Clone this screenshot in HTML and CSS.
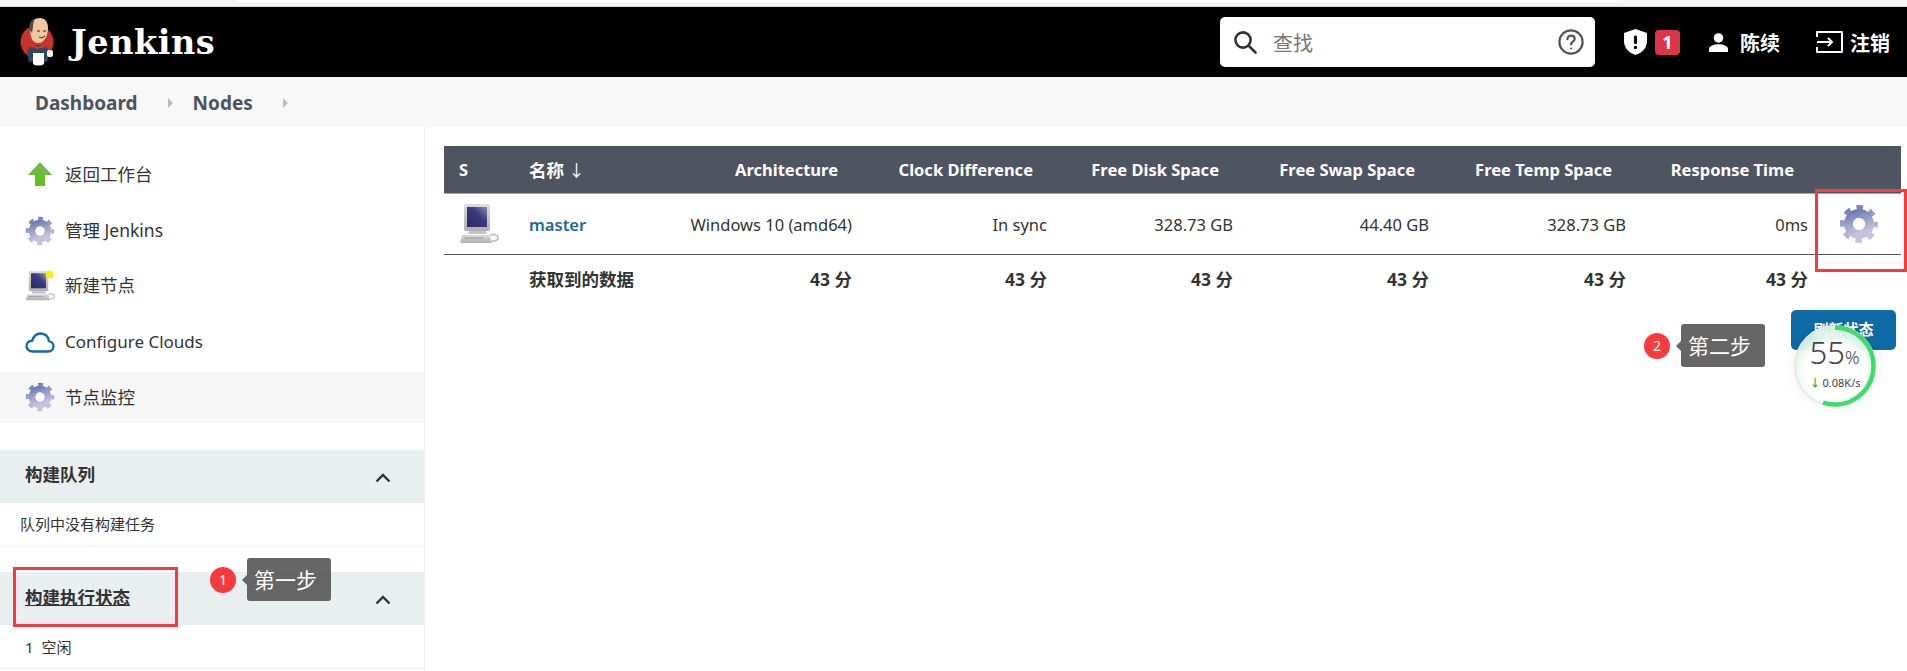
FILE: index.html
```html
<!DOCTYPE html>
<html lang="zh-CN">
<head>
    <meta charset="UTF-8">
    <meta name="viewport" content="width=device-width, initial-scale=1.0">
    <title>Nodes [Jenkins]</title>
    <link rel="stylesheet" href="styles.css">
</head>
<body>
    <!-- 共用图标 -->
    <svg class="icon-defs" xmlns="http://www.w3.org/2000/svg">
        <defs>
            <linearGradient id="gearFill" x1="0" y1="0" x2="0.3" y2="1">
                <stop offset="0" stop-color="#6f7db2"/>
                <stop offset="0.55" stop-color="#a3a5cc"/>
                <stop offset="1" stop-color="#c6c1de"/>
            </linearGradient>
            <linearGradient id="screenFill" x1="0" y1="1" x2="1" y2="0">
                <stop offset="0" stop-color="#2c2a6a"/>
                <stop offset="0.6" stop-color="#3d3a80"/>
                <stop offset="1" stop-color="#8d8ab8"/>
            </linearGradient>
            <linearGradient id="caseFill" x1="0" y1="0" x2="0" y2="1">
                <stop offset="0" stop-color="#dcdcdc"/>
                <stop offset="1" stop-color="#b0b0b0"/>
            </linearGradient>
            <linearGradient id="arrowFill" x1="0" y1="0" x2="0" y2="1">
                <stop offset="0" stop-color="#7fb35a"/>
                <stop offset="1" stop-color="#5cc414"/>
            </linearGradient>
            <symbol id="gear" viewBox="0 0 40 40">
                <circle cx="20" cy="20" r="15.5" fill="none" stroke="url(#gearFill)" stroke-width="7" stroke-dasharray="6.2 6" stroke-dashoffset="3"/>
                <circle cx="20" cy="20" r="10.5" fill="none" stroke="url(#gearFill)" stroke-width="9"/>
                <circle cx="20" cy="20" r="6" fill="#fff"/>
            </symbol>
            <symbol id="computer" viewBox="0 0 40 40">
                <rect x="5" y="0" width="26" height="27" rx="2" fill="url(#caseFill)"/>
                <rect x="8" y="3" width="20" height="20" fill="url(#screenFill)"/>
                <path d="M10 27h17l1 3H9z" fill="#c4c4c4"/>
                <path d="M3 31h28l2 8H1z" fill="url(#caseFill)"/>
                <path d="M5 34h20" stroke="#9a9a9a" stroke-width="1"/>
                <path d="M31 31c5-1 8 0 8 3s-3 3-6 3" fill="none" stroke="#c4c4c4" stroke-width="2"/>
            </symbol>
        </defs>
    </svg>

    <div class="window-strip"><div class="window-tab"></div></div>

    <div class="header">
        <a class="brand">
            <svg class="brand-logo" viewBox="0 0 36 48">
                <circle cx="17" cy="24" r="16.5" fill="#c5332b"/>
                <path d="M7 36c0-6 5-9 11-9s11 3 11 9l-2 8H9z" fill="#2f4a5f"/>
                <path d="M12 26l6 3 6-3 1 3-7 2-7-2z" fill="#d8322a"/>
                <path d="M10 8c0-5 5-8 10-8s8 4 8 10c0 7-3 15-10 15S10 17 10 8z" fill="#f1c6a0"/>
                <path d="M10 12c-2-5 1-10 5-11-2 3-2 6-2 8l-1 6z" fill="#4b4b4b"/>
                <path d="M17 13h3M23 13h3M19 19c2 1 4 1 6-1" stroke="#3a2a20" stroke-width="1" fill="none"/>
                <path d="M13 35h11v11c-3 2-8 2-11 0z" fill="#fff"/>
                <rect x="27" y="32" width="6" height="7" rx="2" fill="#f4f4f4"/>
            </svg>
            <span class="brand-name">Jenkins</span>
        </a>
        <div class="search-box">
            <svg class="search-icon" viewBox="0 0 24 24" fill="none" stroke="#333" stroke-width="2.6" stroke-linecap="round">
                <circle cx="10" cy="10" r="7.6"/>
                <path d="M15.6 15.6L22.5 22.5"/>
            </svg>
            <span class="search-text">查找</span>
            <svg class="help-icon" viewBox="0 0 26 26" fill="none" stroke="#4f5560" stroke-width="2.2">
                <circle cx="13" cy="13" r="11.6"/>
                <path d="M9.4 10.2c0-2.2 1.6-3.6 3.7-3.6s3.6 1.3 3.6 3.2c0 2.8-3.7 2.9-3.7 5.7" stroke-linecap="round"/>
                <circle cx="13" cy="19.4" r="1" fill="#4f5560" stroke="none"/>
            </svg>
        </div>
        <div class="header-actions">
            <div class="action action-alert">
                <svg class="shield-icon" viewBox="0 0 23 26">
                    <path d="M11.5 0L23 4v8c0 7-5 12-11.5 14C5 24 0 19 0 12V4z" fill="#fff"/>
                    <rect x="10" y="6.5" width="3" height="8.5" rx="1.2" fill="#000"/>
                    <circle cx="11.5" cy="18.5" r="1.7" fill="#000"/>
                </svg>
                <span class="badge">1</span>
            </div>
            <div class="action action-user">
                <svg class="person-icon" viewBox="0 0 20 20" fill="#fff">
                    <circle cx="10" cy="5.2" r="5"/>
                    <path d="M0 20v-3c0-3.500 5-5.200 10-5.200s10 1.700 10 5.200v3z"/>
                </svg>
                <span>陈续</span>
            </div>
            <div class="action action-logout">
                <svg class="logout-icon" viewBox="0 0 27 22" fill="none" stroke="#fff" stroke-width="2" stroke-linejoin="round">
                    <path d="M1 6V1h25v20H1v-5"/>
                    <path d="M1 11h15M12 7l4 4-4 4"/>
                </svg>
                <span>注销</span>
            </div>
        </div>
    </div>

    <div class="breadcrumb">
        <a class="crumb">Dashboard</a>
        <span class="crumb-arrow"></span>
        <a class="crumb">Nodes</a>
        <span class="crumb-arrow"></span>
    </div>

    <div class="page">
        <div class="sidebar">
            <div class="task-list">
                <a class="task">
                    <svg class="task-icon" viewBox="0 0 30 30">
                        <path d="M15 2L27 15h-7v11H10V15H3z" fill="url(#arrowFill)"/>
                    </svg>
                    <span>返回工作台</span>
                </a>
                <a class="task">
                    <svg class="task-icon"><use href="#gear"/></svg>
                    <span>管理 Jenkins</span>
                </a>
                <a class="task">
                    <span class="task-icon-wrap">
                        <svg class="task-icon"><use href="#computer"/></svg>
                        <span class="new-dot"></span>
                    </span>
                    <span>新建节点</span>
                </a>
                <a class="task task-latin">
                    <svg class="task-icon" viewBox="0 0 30 30" fill="none" stroke="#0f6ba5" stroke-width="2.4" stroke-linejoin="round">
                        <path d="M8 24.500C4 24.500 1.500 22 1.500 19c0-3.200 2.600-5.500 5.700-5.300C8.500 9.500 11.800 6.500 15.800 6.500c4.500 0 7.800 3.300 8 7.600 2.600.3 4.700 2.300 4.700 5.100 0 3-2.300 5.300-5.500 5.300z"/>
                    </svg>
                    <span>Configure Clouds</span>
                </a>
                <a class="task task-active">
                    <svg class="task-icon"><use href="#gear"/></svg>
                    <span>节点监控</span>
                </a>
            </div>

            <div class="pane pane-queue">
                <div class="pane-header">
                    <span class="pane-title">构建队列</span>
                    <svg class="chevron" viewBox="0 0 16 10" fill="none" stroke="#333" stroke-width="2.4"><path d="M1.500 8.500L8 2l6.500 6.500"/></svg>
                </div>
                <div class="pane-body">队列中没有构建任务</div>
            </div>
            <div class="pane pane-exec">
                <div class="pane-header">
                    <span class="pane-title pane-link">构建执行状态</span>
                    <svg class="chevron" viewBox="0 0 16 10" fill="none" stroke="#333" stroke-width="2.4"><path d="M1.500 8.500L8 2l6.500 6.500"/></svg>
                </div>
                <div class="pane-body pane-body-exec"><span>1</span><span>空闲</span></div>
            </div>
        </div>

        <div class="main">
            <table class="computers">
                <colgroup>
                    <col class="col-s"><col class="col-name"><col class="col-arch"><col class="col-clock">
                    <col class="col-disk"><col class="col-swap"><col class="col-temp"><col class="col-resp"><col class="col-gear">
                </colgroup>
                <thead>
                    <tr>
                        <th class="left">S</th>
                        <th class="left"><span class="th-zh">名称</span> <span class="sort-arrow">↓</span></th>
                        <th>Architecture</th>
                        <th>Clock Difference</th>
                        <th>Free Disk Space</th>
                        <th>Free Swap Space</th>
                        <th>Free Temp Space</th>
                        <th>Response Time</th>
                        <th></th>
                    </tr>
                </thead>
                <tbody>
                    <tr class="node-row">
                        <td class="left"><svg class="node-icon"><use href="#computer"/></svg></td>
                        <td class="left"><a class="node-link">master</a></td>
                        <td>Windows 10 (amd64)</td>
                        <td>In sync</td>
                        <td>328.73 GB</td>
                        <td>44.40 GB</td>
                        <td>328.73 GB</td>
                        <td>0ms</td>
                        <td class="gear-cell"><svg class="node-gear"><use href="#gear"/></svg></td>
                    </tr>
                    <tr class="data-row">
                        <td></td>
                        <td class="left data-label">获取到的数据</td>
                        <td>43 分</td>
                        <td>43 分</td>
                        <td>43 分</td>
                        <td>43 分</td>
                        <td>43 分</td>
                        <td>43 分</td>
                        <td></td>
                    </tr>
                </tbody>
            </table>
            <div class="refresh-row">
                <button class="refresh-btn">刷新状态</button>
            </div>
        </div>
    </div>

    <!-- 教程标注 -->
    <div class="mark-box mark-box-exec"></div>
    <div class="mark-box mark-box-gear"></div>
    <div class="step step-one">
        <span class="step-num">1</span>
        <span class="step-tip">第一步</span>
    </div>
    <div class="step step-two">
        <span class="step-num">2</span>
        <span class="step-tip">第二步</span>
    </div>

    <!-- 网速悬浮球 -->
    <div class="speed-ball">
        <svg class="speed-ring" viewBox="0 0 82 82" fill="none">
            <circle cx="41" cy="41" r="40" stroke="#e6e6e6" stroke-width="1.500"/>
            <circle class="speed-arc" cx="41" cy="41" r="38.500" stroke="#3ddc6b" stroke-width="4.500" stroke-dasharray="133 109"/>
        </svg>
        <div class="speed-value">55<span class="speed-pct">%</span></div>
        <div class="speed-rate"><span class="speed-down">↓</span>0.08K/s</div>
    </div>
</body>
</html>
```

FILE: styles.css
```css
html, body {
    height: 100%;
}

body {
    margin: 0;
    overflow: hidden;
    background-color: #fff;
    color: #333;
    font-family: 'Noto Sans', 'Noto Sans CJK SC', sans-serif;
    font-size: 16.5px;
}

.icon-defs {
    display: block;
    width: 0;
    height: 0;
}

/* 顶部残留的浏览器边 */
.window-strip {
    height: 6px;
    padding-left: 237px;
    padding-right: 284px;
    background-color: #f5f5f5;
    border-bottom: 1px solid #d9d9d9;
}

.window-tab {
    height: 2px;
    background-color: #fff;
}

.header {
    display: flex;
    align-items: center;
    height: 70px;
    background-color: #000;
    color: #fff;
}

.brand {
    display: flex;
    align-items: center;
    margin-left: 20px;
}

.brand-logo {
    width: 36px;
    height: 48px;
}

.brand-name {
    margin-left: 15px;
    font-family: 'DejaVu Serif', serif;
    font-size: 33.5px;
    font-weight: bold;
    letter-spacing: 0.5px;
}

.search-box {
    display: flex;
    align-items: center;
    width: 375px;
    height: 50px;
    margin-left: auto;
    padding: 0 11px 0 13px;
    box-sizing: border-box;
    background-color: #fff;
    border-radius: 5px;
}

.search-icon {
    width: 24px;
    height: 24px;
}

.search-text {
    margin-left: 16px;
    color: #777;
    font-size: 20px;
}

.help-icon {
    width: 26px;
    height: 26px;
    margin-left: auto;
}

.header-actions {
    display: flex;
    align-items: center;
    margin-left: 29px;
    margin-right: 17px;
    font-size: 20px;
    font-weight: bold;
}

.action {
    display: flex;
    align-items: center;
}

.action-alert {
    gap: 8px;
}

.action-user {
    gap: 12px;
    margin-left: 29px;
}

.action-logout {
    gap: 7px;
    margin-left: 36px;
}

.shield-icon {
    width: 23px;
    height: 26px;
}

.badge {
    width: 25px;
    height: 25px;
    background-color: #dc3545;
    border-radius: 4px;
    font-family: 'Noto Sans', sans-serif;
    font-size: 18px;
    line-height: 25px;
    text-align: center;
}

.person-icon {
    width: 19px;
    height: 19px;
}

.logout-icon {
    width: 27px;
    height: 22px;
}

.breadcrumb {
    display: flex;
    align-items: center;
    height: 50px;
    padding-left: 35px;
    padding-top: 1px;
    box-sizing: border-box;
    background-color: #f8f8f8;
    color: #4d545d;
    font-size: 19px;
    font-weight: bold;
}

.crumb-arrow {
    width: 0;
    height: 0;
    margin: 0 20px 0 30px;
    border-left: 5px solid #bbb;
    border-top: 5px solid transparent;
    border-bottom: 5px solid transparent;
}

.page {
    display: flex;
    height: 544px;
}

.sidebar {
    width: 424px;
    flex-shrink: 0;
    border-right: 1px solid #eee;
}

.task-list {
    display: flex;
    flex-direction: column;
    gap: 4.6px;
    padding-top: 22.5px;
}

.task {
    display: flex;
    align-items: center;
    height: 51px;
    padding-left: 25px;
    font-size: 17.5px;
}

.task-latin {
    font-size: 17px;
}

.task span {
    line-height: 1;
}

.task-active {
    background-color: #f7f7f7;
}

.task-icon {
    width: 30px;
    height: 30px;
    margin-right: 10px;
    flex-shrink: 0;
}

.task-icon-wrap {
    position: relative;
    display: flex;
}

.new-dot {
    position: absolute;
    top: 0;
    left: 21px;
    width: 7px;
    height: 7px;
    background-color: #f6f000;
    border-radius: 50%;
    box-shadow: 0 0 3px #f6f000;
}

.pane-queue {
    margin-top: 27px;
}

.pane-exec {
    margin-top: 25px;
}

.pane-header {
    display: flex;
    align-items: center;
    justify-content: space-between;
    height: 53px;
    padding: 0 33px 0 25px;
    background-color: #e9eef1;
    font-size: 17.5px;
    font-weight: bold;
}

.pane-title {
    margin-bottom: 5px;
}

.pane-link {
    margin-bottom: 3px;
    text-decoration: underline;
}

.chevron {
    width: 16px;
    height: 10px;
    margin-top: 3px;
}

.pane-body {
    height: 43px;
    padding-left: 20px;
    border-bottom: 1px solid #e9eef1;
    font-size: 15px;
    line-height: 43px;
}

.pane-body-exec {
    display: flex;
    gap: 8px;
    padding-left: 25px;
    line-height: 45px;
}

.main {
    flex: 1;
    padding: 19px 6px 0 19px;
}

.computers {
    width: 100%;
    table-layout: fixed;
    border-collapse: collapse;
}

.col-s { width: 70px; }
.col-name { width: 161px; }
.col-arch { width: 192px; }
.col-clock { width: 195px; }
.col-disk { width: 186px; }
.col-swap { width: 196px; }
.col-temp { width: 197px; }
.col-resp { width: 182px; }

.computers th {
    height: 47px;
    padding: 0 29px 0 0;
    background-color: #4f5560;
    border-bottom: 1px solid #9ba7af;
    color: #fff;
    font-weight: bold;
    text-align: right;
    white-space: nowrap;
}

.th-zh {
    font-size: 17.5px;
}

.computers td {
    padding: 0 15px 0 0;
    text-align: right;
    white-space: nowrap;
}

.computers .left {
    padding-left: 15px;
    padding-right: 0;
    text-align: left;
}

.node-row td {
    height: 60px;
    border-bottom: 1px solid #4f5560;
}

.data-row td {
    height: 46px;
    padding-bottom: 2px;
    font-size: 17.5px;
    font-weight: bold;
}

.node-icon {
    display: block;
    width: 40px;
    height: 40px;
}

.node-link {
    color: #1a6a9a;
    font-weight: 600;
}

.sort-arrow {
    font-weight: normal;
}

.computers .gear-cell {
    padding: 0 7px 0 0;
    text-align: right;
}

.node-gear {
    display: block;
    width: 40px;
    height: 40px;
    margin-left: auto;
    margin-right: 15px;
}

.refresh-row {
    display: flex;
    justify-content: flex-end;
    margin-top: 7px;
    padding-right: 5px;
}

.refresh-btn {
    width: 105px;
    height: 40px;
    padding: 0 0 2px;
    background-color: #0f6ba5;
    border: none;
    border-radius: 5px;
    color: #fff;
    font-family: inherit;
    font-size: 15px;
    font-weight: bold;
    line-height: 1;
}

.mark-box {
    position: absolute;
    box-sizing: border-box;
    border: 3px solid #f73a3d;
}

.mark-box-exec {
    left: 13px;
    top: 567px;
    width: 165px;
    height: 60px;
}

.mark-box-gear {
    left: 1815px;
    top: 189px;
    width: 92px;
    height: 83px;
}

.step {
    position: absolute;
    display: flex;
    align-items: center;
    gap: 11px;
}

.step-one {
    left: 210px;
    top: 558px;
}

.step-two {
    left: 1644px;
    top: 324px;
}

.step-num {
    width: 26px;
    height: 26px;
    margin-top: 1px;
    background-color: #f73a3d;
    border-radius: 50%;
    color: #fff;
    font-size: 14px;
    line-height: 26px;
    text-align: center;
}

.step-tip {
    position: relative;
    width: 84px;
    height: 43px;
    padding-left: 7px;
    box-sizing: border-box;
    background-color: rgba(85, 85, 85, 0.9);
    border-radius: 3px;
    color: #fff;
    font-size: 21px;
    line-height: 44px;
}

.step-tip::before {
    content: '';
    position: absolute;
    left: -5px;
    top: 17px;
    border-right: 5px solid rgba(85, 85, 85, 0.9);
    border-top: 5px solid transparent;
    border-bottom: 5px solid transparent;
}

.speed-ball {
    position: absolute;
    left: 1794px;
    top: 325px;
    display: flex;
    flex-direction: column;
    align-items: center;
    width: 82px;
    height: 82px;
    background: radial-gradient(circle at 50% 58%, #fff 45%, rgba(214, 244, 223, 0.9) 72%, rgba(214, 244, 223, 0.55) 100%);
    border-radius: 50%;
    box-shadow: 0 0 12px rgba(0, 0, 0, 0.08);
    color: #444;
}

.speed-ring {
    position: absolute;
    left: 0;
    top: 0;
    width: 82px;
    height: 82px;
}

.speed-arc {
    transform: rotate(-90deg);
    transform-origin: 41px 41px;
}

.speed-value {
    margin-top: 8px;
    margin-left: -1px;
    font-size: 31px;
    line-height: 38px;
    font-weight: 300;
}

.speed-pct {
    font-size: 18px;
}

.speed-rate {
    font-size: 11px;
    line-height: 14px;
    white-space: nowrap;
}

.speed-down {
    margin-right: 2px;
    color: #1fb84f;
    font-weight: bold;
}
```
